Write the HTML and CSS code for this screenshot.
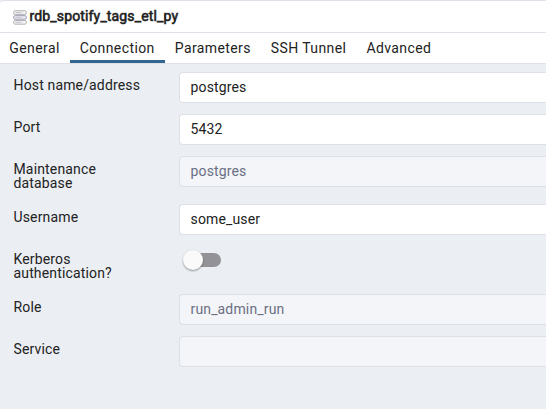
FILE: index.html
```html
<!DOCTYPE html>
<html lang="en">
<head>
<meta charset="utf-8">
<title>rdb_spotify_tags_etl_py</title>
<link rel="stylesheet" href="styles.css">
</head>
<body>
<div class="dialog">
  <header class="titlebar">
    <svg class="server-icon" width="14" height="15" viewBox="0 0 14 15" fill="#f2f2f3" stroke-width="1">
      <rect x="0.6" y="0.7" width="12.8" height="3.7" rx="1.6" stroke="#b3b3b6"/>
      <rect x="0.6" y="5.6" width="12.8" height="3.7" rx="1.6" fill="#e6e5ee" stroke="#a5a3b8"/>
      <rect x="0.6" y="10.5" width="12.8" height="3.7" rx="1.6" stroke="#b3b3b6"/>
      <path d="M2.5 2.5h6M2.5 7.4h6M2.5 12.3h6" stroke="#c5c4cf"/>
    </svg>
    <span class="title">rdb_spotify_tags_etl_py</span>
  </header>
  <nav class="tabs">
    <span class="tab">General</span>
    <span class="tab active">Connection</span>
    <span class="tab">Parameters</span>
    <span class="tab">SSH Tunnel</span>
    <span class="tab">Advanced</span>
  </nav>
  <main class="form">
    <div class="row"><label class="label">Host name/address</label><div class="input">postgres</div></div>
    <div class="row"><label class="label">Port</label><div class="input">5432</div></div>
    <div class="row"><label class="label">Maintenance<br>database</label><div class="input disabled">postgres</div></div>
    <div class="row"><label class="label">Username</label><div class="input">some_user</div></div>
    <div class="row"><label class="label">Kerberos<br>authentication?</label><div class="switch"><span class="thumb"></span></div></div>
    <div class="row"><label class="label">Role</label><div class="input disabled">run_admin_run</div></div>
    <div class="row"><label class="label">Service</label><div class="input disabled"></div></div>
  </main>
</div>
</body>
</html>
```
FILE: styles.css
```css
* { box-sizing: border-box; }
html { background: #ebeef3; }
body {
  margin: 0;
  font: 14px/14px Roboto, "Liberation Sans", sans-serif;
  letter-spacing: 0.15px;
  color: #222;
}
.dialog {
  height: 409px;
  overflow: hidden;
  border-top: 1px solid #dde0e6;
  border-top-left-radius: 4px;
  background: #ebeef3;
}
.titlebar {
  display: flex;
  align-items: center;
  gap: 2.5px;
  height: 32px;
  padding: 0 0 1px 13px;
  background: #fff;
  border-bottom: 1px solid #dde0e6;
}
.server-icon { flex: none; position: relative; top: 1px; }
.title { -webkit-text-stroke: 0.6px #222; }
.tabs {
  display: flex;
  height: 31px;
  padding-right: 10px;
  background: #fff;
  border-bottom: 1px solid #dde0e6;
  letter-spacing: 0.4px;
}
.tab { padding: 8px 10px 0; }
.tab:first-child { padding-left: 9.3px; }
.tab.active { border-bottom: 3px solid #326690; }
.form { padding: 8px 0 0 13.5px; }
.row {
  display: grid;
  grid-template-columns: 165.5px 1fr;
  align-items: start;
  margin-bottom: 11px;
}
.label { padding: 6px 0 3px; }
.input {
  height: 31px;
  padding: 7px 10.5px;
  border: 1px solid #dde0e6;
  border-right: 0;
  border-radius: 4px 0 0 4px;
  background: #fff;
  white-space: nowrap;
}
.input.disabled { background: #f3f5f9; color: #6b6f83; }
.switch {
  display: flex;
  width: 34px;
  height: 14px;
  margin: 7px 0 0 8px;
  border-radius: 7px;
  background: #939397;
}
.thumb {
  flex: none;
  width: 20px;
  height: 20px;
  margin: -3px 0 0 -4px;
  border-radius: 50%;
  background: #fafafa;
  box-shadow: 0 1px 2px rgba(0, 0, 0, 0.4);
}
```
